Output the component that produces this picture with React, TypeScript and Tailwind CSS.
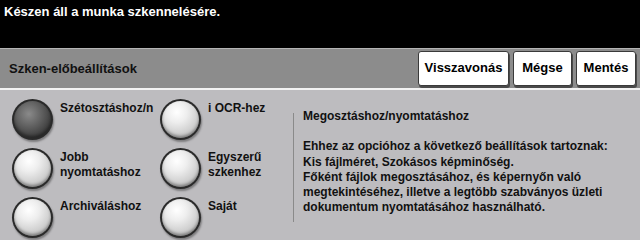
const PRESETS = [
  { label: ["Szétosztáshoz/n"], selected: true },
  { label: ["i OCR-hez"] },
  { label: ["Jobb", "nyomtatáshoz"] },
  { label: ["Egyszerű", "szkenhez"] },
  { label: ["Archiváláshoz"] },
  { label: ["Saját"] },
];

function Radio({ selected }: { selected?: boolean }) {
  const face = selected
    ? "bg-[radial-gradient(circle_at_40%_35%,#8a8a8a_0%,#5a5a5a_45%,#2e2e2e_85%)]"
    : "bg-[radial-gradient(circle_at_40%_30%,#ffffff_0%,#eeeeee_30%,#c9c9c9_70%,#a8a8a8_95%)]";
  return (
    <div className="size-[41px] shrink-0 rounded-full bg-[#2a2a2a] p-[2px] shadow-[1px_2px_2px_rgba(0,0,0,0.35)]">
      <div className={`size-full rounded-full ${face} shadow-[inset_0_-2px_3px_rgba(0,0,0,0.35)]`} />
    </div>
  );
}

function ToolButton({ label, w }: { label: string; w: string }) {
  return (
    <button
      className={`${w} h-[35px] rounded-[3px] border border-[#3a3a3a] bg-white text-[13px] font-bold text-black shadow-[1px_2px_0_#4a4a4a]`}
    >
      {label}
    </button>
  );
}

export default function App() {
  return (
    <div className="flex h-[240px] w-[640px] flex-col overflow-hidden bg-[#bdbcbf] font-['Liberation_Sans',Arial,sans-serif] text-[12px] font-bold text-[#111]">
      {/* status line */}
      <div className="h-[48px] bg-black px-[4px] pt-[2px] text-[13px] text-white">
        Készen áll a munka szkennelésére.
      </div>

      {/* title bar */}
      <div className="flex h-[42px] items-center justify-between border-t border-[#b4b4b4] border-b-2 border-b-[#f2f2f2] bg-[#8c8c8c] pl-[9px] pr-[4px]">
        <span className="text-[13px] text-[#111]">Szken-előbeállítások</span>
        <div className="flex gap-[4px] pb-[1px]">
          <ToolButton label="Visszavonás" w="w-[91px]" />
          <ToolButton label="Mégse" w="w-[59px]" />
          <ToolButton label="Mentés" w="w-[60px]" />
        </div>
      </div>

      {/* body */}
      <div className="flex flex-1">
        <div className="grid w-[293px] grid-cols-[148px_1fr] gap-y-[6px] pl-[12px] pt-[9px]">
          {PRESETS.map((p, i) => (
            <div key={i} className="flex h-[41px] gap-[7px]">
              <Radio selected={p.selected} />
              <div className="pt-[2px] leading-[15px]">
                {p.label.map((l) => (
                  <div key={l}>{l}</div>
                ))}
              </div>
            </div>
          ))}
        </div>

        <div className="mt-[23px] mb-[18px] w-px bg-[#8a8a8a]" />

        <div className="pl-[9px] pt-[19px] leading-[15.3px]">
          <div>Megosztáshoz/nyomtatáshoz</div>
          <div className="mt-[15px]">
            Ehhez az opcióhoz a következő beállítások tartoznak:
            <br />
            Kis fájlméret, Szokásos képminőség.
            <br />
            Főként fájlok megosztásához, és képernyőn való
            <br />
            megtekintéséhez, illetve a legtöbb szabványos üzleti
            <br />
            dokumentum nyomtatásához használható.
          </div>
        </div>
      </div>
    </div>
  );
}
